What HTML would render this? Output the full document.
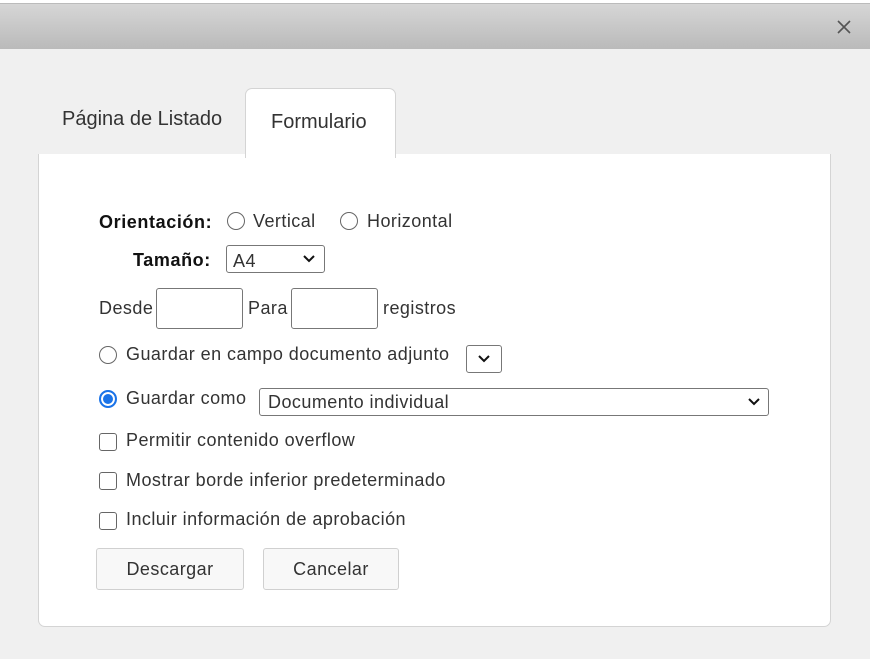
<!DOCTYPE html>
<html><head><meta charset="utf-8"><style>
*{box-sizing:border-box;margin:0;padding:0}
body{width:870px;height:659px;position:relative;overflow:hidden;background:#f0f0f0;font-family:"Liberation Sans",sans-serif;color:#333;font-size:18px;letter-spacing:.45px}
.a{position:absolute;white-space:nowrap}
.top{left:0;top:0;width:870px;height:4px;background:#fff;border-bottom:1px solid #bbb}
.hdr{left:0;top:4px;width:870px;height:45px;background:linear-gradient(#d6d6d6,#bababa)}
.panel{left:38px;top:154px;width:793px;height:473px;background:#fff;border:1px solid #d4d4d4;border-top:none;border-radius:0 0 7px 7px}
.tab{left:245px;top:88px;width:151px;height:70px;background:#fff;border:1px solid #d4d4d4;border-bottom:none;border-radius:7px 7px 0 0}
.radio{width:18px;height:18px;border:1px solid #666;border-radius:50%;background:#fff}
.chk{width:18px;height:18px;border:1px solid #666;border-radius:3px;background:#fff}
.box{border:1px solid #777;border-radius:3px;background:#fff}
.btn{border:1px solid #d0d0d0;border-radius:3px;background:#f8f8f8;text-align:center;line-height:40px}
b{color:#111;letter-spacing:.6px}
.t20{font-size:20px;letter-spacing:0}
</style></head><body>
<div class="a top"></div>
<div class="a hdr"></div>
<svg class="a" style="left:837px;top:20px" width="14" height="14"><path d="M1 1L13 13M13 1L1 13" stroke="#555" stroke-width="1.6"/></svg>
<div class="a t20" style="left:62px;top:108px">Página de Listado</div>
<div class="a panel"></div>
<div class="a tab"></div>
<div class="a t20" style="left:271px;top:111px">Formulario</div>

<div class="a" style="left:99px;top:212px"><b>Orientación:</b></div>
<div class="a radio" style="left:227px;top:212px"></div>
<div class="a" style="left:253px;top:211px">Vertical</div>
<div class="a radio" style="left:340px;top:212px"></div>
<div class="a" style="left:367px;top:211px">Horizontal</div>

<div class="a" style="left:133px;top:250px"><b>Tamaño:</b></div>
<div class="a box" style="left:226px;top:245px;width:99px;height:28px"></div>
<div class="a" style="left:233px;top:251px">A4</div>
<svg class="a" style="left:302px;top:254px" width="14" height="10"><path d="M2 2l5 5 5-5" stroke="#111" stroke-width="2" fill="none"/></svg>

<div class="a" style="left:99px;top:298px">Desde</div>
<div class="a box" style="left:156px;top:288px;width:87px;height:41px"></div>
<div class="a" style="left:248px;top:298px">Para</div>
<div class="a box" style="left:291px;top:288px;width:87px;height:41px"></div>
<div class="a" style="left:383px;top:298px">registros</div>

<div class="a radio" style="left:99px;top:346px"></div>
<div class="a" style="left:126px;top:344px">Guardar en campo documento adjunto</div>
<div class="a box" style="left:466px;top:345px;width:36px;height:28px"></div>
<svg class="a" style="left:477px;top:354px" width="14" height="10"><path d="M2 2l5 5 5-5" stroke="#111" stroke-width="2" fill="none"/></svg>

<div class="a radio" style="left:99px;top:390px;border:2px solid #1a73e8;background:#1a73e8;box-shadow:inset 0 0 0 2px #fff"></div>
<div class="a" style="left:126px;top:388px">Guardar como</div>
<div class="a box" style="left:259px;top:388px;width:510px;height:28px"></div>
<div class="a" style="left:268px;top:392px">Documento individual</div>
<svg class="a" style="left:747px;top:397px" width="14" height="10"><path d="M2 2l5 5 5-5" stroke="#111" stroke-width="2" fill="none"/></svg>

<div class="a chk" style="left:99px;top:433px"></div>
<div class="a" style="left:126px;top:430px">Permitir contenido overflow</div>
<div class="a chk" style="left:99px;top:472px"></div>
<div class="a" style="left:126px;top:470px">Mostrar borde inferior predeterminado</div>
<div class="a chk" style="left:99px;top:512px"></div>
<div class="a" style="left:126px;top:509px">Incluir información de aprobación</div>

<div class="a btn" style="left:96px;top:548px;width:148px;height:42px">Descargar</div>
<div class="a btn" style="left:263px;top:548px;width:136px;height:42px">Cancelar</div>
</body></html>
